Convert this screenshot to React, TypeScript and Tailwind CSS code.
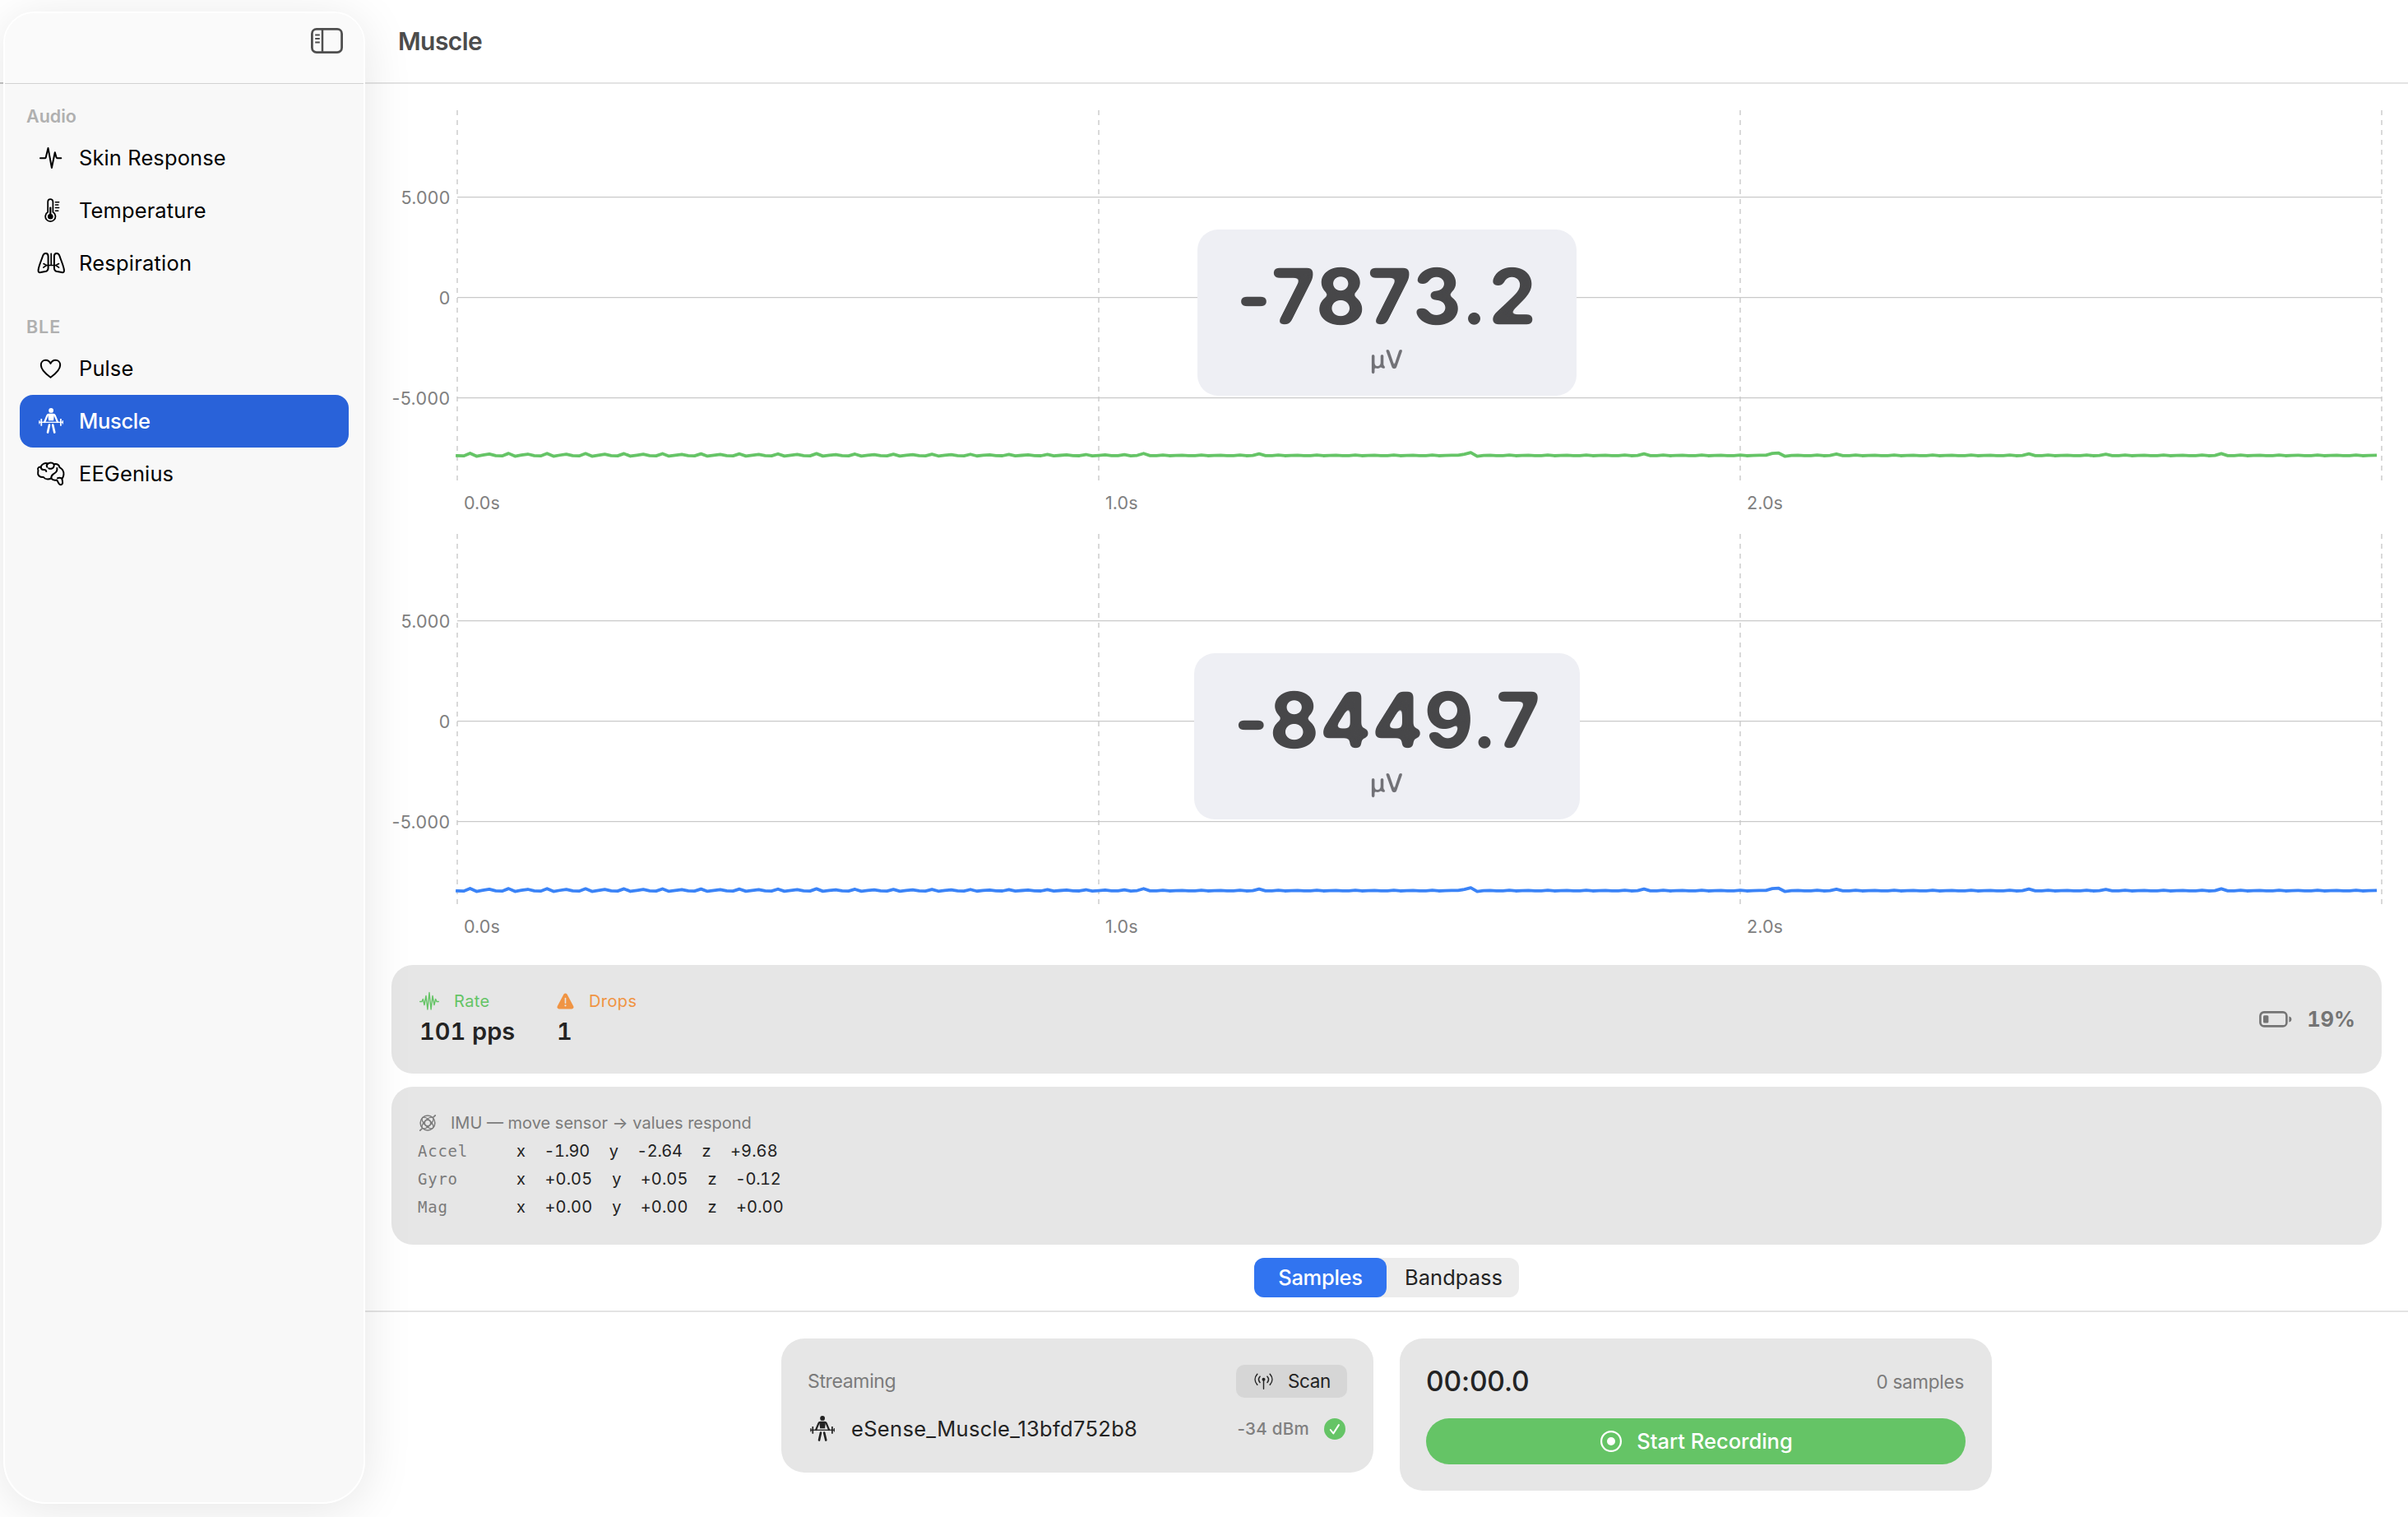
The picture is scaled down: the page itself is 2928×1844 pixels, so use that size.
import type { ReactNode } from "react";

const SAMPLE_SHAPE = [0.1, 0.4, -2.8, 0.8, -0.6, -1.9];
const BUMPS: Record<number, number> = { 56: -2.4, 107: -2.6, 125: -2.2, 156: -0.4, 157: -1.6, 158: -3.6, 159: 0.9, 185: -2.2, 204: -0.4, 205: -2.6, 206: -3.1, 207: 0.9, 215: -2, 245: -2.2, 257: -1.6, 275: -2.4 };

function trace(base: number) {
  const pts: string[] = [];
  for (let i = 0; i <= 299; i++) {
    const decay = i < 110 ? 1 - i * 0.0055 : 0.22;
    const dy = BUMPS[i] ?? SAMPLE_SHAPE[i % 6] * decay;
    pts.push(`${(112 + i * 7.8).toFixed(1)},${(base + dy).toFixed(2)}`);
  }
  return pts.join(" ");
}

function Chart({ children, color, base }: { children: ReactNode; color: string; base: number }) {
  return (
    <div className="relative h-[515px] w-full">
      <svg width="2484" height="515" viewBox="0 0 2484 515" className="block overflow-visible font-['Inter',sans-serif] text-[21.5px]">
        {[112, 892, 1672, 2452].map((x) => (
          <line key={x} x1={x} x2={x} y1="32" y2="482" stroke="#d9d9d9" strokeWidth="2" strokeDasharray="6 6" />
        ))}
        {[137.6, 259.6, 381.6].map((y) => (
          <line key={y} x1="112" x2="2452" y1={y} y2={y} stroke="#c9c9c9" strokeWidth="1.2" />
        ))}
        <g fill="#808080" textAnchor="end" letterSpacing="0.25">
          <text x="103.5" y="145.8">5.000</text>
          <text x="103.5" y="268">0</text>
          <text x="103.5" y="390" letterSpacing="0.4">-5.000</text>
        </g>
        <g fill="#808080" letterSpacing="0.1">
          <text x="120" y="517.3">0.0s</text>
          <text x="900" y="517.3">1.0s</text>
          <text x="1680" y="517.3">2.0s</text>
        </g>
        <polyline points={trace(base)} fill="none" stroke={color} strokeWidth="3.8" strokeLinejoin="round" strokeLinecap="square" />
      </svg>
      {children}
    </div>
  );
}

const readout = "h-[112px] whitespace-nowrap text-[93px] font-bold leading-[112px] text-[#474749] [filter:url(#soft-lg)] [font-feature-settings:'calt'_0]";
const unit = "-ml-px text-[31px] font-medium leading-[41px] text-[#727277] [filter:url(#soft-sm)]";

function Lifter({ size = 36 }: { size?: number }) {
  return (
    <svg width={size} height={size} viewBox="0 0 36 36" fill="none" stroke="currentColor" strokeLinecap="round" strokeLinejoin="round">
      <circle cx="18.1" cy="4.9" r="2.9" fill="currentColor" stroke="none" />
      <path d="M15.2 9.9h5.8c1 0 1.4.3 1.8 1.3L26 19M15.200 9.900c-1 0-1.400.3-1.800 1.300L10.200 19" strokeWidth="2.200" />
      <path d="M14.200 9h7.800l-.9 8.300h-6Z" fill="currentColor" stroke="none" />
      <path d="M16 22.600L14 31.600M20.200 22.600L22.300 31.600" strokeWidth="2.600" />
      <path d="M3.200 19.300H33" strokeWidth="1.300" strokeLinecap="butt" />
      <path d="M6.300 14.900v8.800M29.900 14.900v8.800" strokeWidth="1.700" strokeLinecap="butt" />
      <path d="M3.900 17v4.600M32.300 17v4.600" strokeWidth="1.100" strokeLinecap="butt" />
    </svg>
  );
}

const ic = { width: 36, height: 36, viewBox: "0 0 36 36", fill: "none", stroke: "currentColor", strokeWidth: 2, strokeLinecap: "round", strokeLinejoin: "round" } as const;

const icons: Record<string, ReactNode> = {
  skin: <svg {...ic}><path d="M5 18.3h5.8c.6 0 .8-.3.9-.8L14.5 5.9 18.9 30 22.8 11.2l1.8 6.3c.2.6.5.8 1 .8h4.7" /></svg>,
  temp: (
    <svg {...ic} strokeWidth={1.8}>
      <path d="M14.2 19.8V7.2a3.1 3.1 0 0 1 6.2 0v12.6a6.1 6.1 0 1 1-6.2 0Z" />
      <circle cx="17.3" cy="25.3" r="3.3" fill="currentColor" stroke="none" />
      <path d="M17.3 25V14.5" strokeWidth="2.2" />
      <path d="M23.4 7.7h4.3M23.4 11h3.4M23.4 14.6h4.3M23.4 18.2h3.4" strokeWidth="1.5" />
    </svg>
  ),
  lungs: (
    <svg {...ic} strokeWidth={2}>
      <path d="M14.6 21V9.5c0-4.4-5.2-4.6-6.6-.3C6 15.4 3.4 20.5 2.6 26c-.4 2.8.8 3.5 3 3.1l5.4-1c2.6-.6 3.6-1.8 3.6-4.4Z" />
      <path d="M21.9 21V9.5c0-4.4 5.2-4.6 6.6-.3 2 6.2 4.6 11.3 5.4 16.8.4 2.8-.8 3.5-3 3.1l-5.4-1c-2.6-.6-3.6-1.8-3.6-4.4Z" />
      <path d="M18.2 6.3V20.5M18.2 20.5H12.5l-3.7 2.6M12.5 20.5 9 18.6M18.2 20.5h5.7l3.7 2.6M23.9 20.5l3.6-1.9" strokeWidth="1.7" />
    </svg>
  ),
  heart: <svg {...ic}><path d="M17.5 28.8C10 23.3 5.8 18.6 5.8 13.7c0-3.5 2.6-5.9 5.7-5.9 2.6 0 4.8 1.4 6 4.1 1.2-2.7 3.4-4.1 6-4.1 3.1 0 5.7 2.4 5.7 5.9 0 4.9-4.2 9.6-11.7 15.1Z" /></svg>,
  muscle: <Lifter />,
  brain: (
    <svg {...ic}>
      <path d="M5.6 9.4C7 5.8 11 4.3 14.2 5.6c3-1.6 5.6-1.3 7.4.6 3.6-.6 6.2 1 6.9 4 3.7 2 5.3 5.6 4.9 9-.2 2.3-1.2 3.5-2 4.6.3 2.4.9 3.5.7 5.5-.4 2.2-3.2 2.6-4.4.7-.9-1.4-1.5-3-2.7-4.6-2.7.6-5.2.1-6.7-1.9-3.6 1.6-7.6 1.1-9.4-1.5-4.9.2-7.4-2.5-6.7-5.9.4-1.9.5-2.5 0-3.5-.5-1.5.9-3.3 3.4-3.2Z" />
      <path d="M5.6 9.4c.1 2.2 1.1 3.4 3.1 3.7M8.7 13.1c2.3-.4 3.4.4 3.6 2M14.2 5.6c-1.6 1.2-1.8 2.8-.8 4.2M21.6 6.2c.6 3-.4 4.7-3.2 5.5-1.1.3-2.4.1-3.2-.5M18.3 23.5c-.4-4 1.5-4.5 3.7-6 2.7-1.7 3.9-4 3.3-6.5M26 23.200c1.900-.6 3.700-.4 5.200.4" />
    </svg>
  ),
};

function NavItem({ icon, label, tracking = "tracking-[0.1px]", active = false }: { icon: string; label: string; tracking?: string; active?: boolean }) {
  return (
    <div className={`flex h-16 items-center gap-4 rounded-[16px] pl-5 text-[25.5px] ${tracking} ${active ? "bg-[#2962d9] font-medium text-white" : "text-black"}`}>
      {icons[icon]}
      <span>{label}</span>
    </div>
  );
}

function Sidebar() {
  return (
    <aside className="relative z-10 mt-[14px] h-[1814px] w-[440px] shrink-0 overflow-hidden rounded-b-[52px] rounded-t-[38px] border-2 border-white bg-[#f8f8f8] shadow-[0_8px_60px_rgba(0,0,0,0.1)]">
      <div className="flex h-[86px] items-start justify-end border-b border-[#d2d2d2] bg-[#fafafa] pr-[25px] pt-[18px] text-[#4f4f4f]">
        <svg width="39" height="31" viewBox="0 0 39 31" fill="none" stroke="currentColor">
          <rect x="1.4" y="1.4" width="36.2" height="28.2" rx="5.5" strokeWidth="2.8" />
          <path d="M14 2v27" strokeWidth="2.5" />
          <path d="M5.2 8.5h5.6M5.2 13h5.6M5.2 17.5h5.6" strokeWidth="2" />
        </svg>
      </div>
      <nav className="px-[18px]">
        <div className="mt-5 flex h-[38px] items-center pl-2 text-[21.5px] font-semibold text-[#b0b0b0]">Audio</div>
        <NavItem icon="skin" label="Skin Response" />
        <NavItem icon="temp" label="Temperature" />
        <NavItem icon="lungs" label="Respiration" tracking="tracking-[0.2px]" />
        <div className="mt-[26px] flex h-[38px] items-center pl-2 text-[21.5px] font-semibold tracking-[0.9px] text-[#b0b0b0]">BLE</div>
        <NavItem icon="heart" label="Pulse" />
        <NavItem icon="muscle" label="Muscle" tracking="tracking-[-0.3px]" active />
        <NavItem icon="brain" label="EEGenius" />
      </nav>
    </aside>
  );
}

function ImuRow({ label, values }: { label: string; values: [string, string, string] }) {
  return (
    <div className="flex h-[34px] items-center">
      <span className="w-[120px] font-['DejaVu_Sans_Mono',monospace] text-[19px] tracking-[0.75px] text-[#7b7b7b]">{label}</span>
      <div className="flex gap-6 tabular-nums [font-feature-settings:'calt'_0]">
        {values.map((v, i) => (
          <span key={i} className="flex gap-6">
            <span className="w-[10.5px]">{"xyz"[i]}</span>
            <span className={v.startsWith("-") ? "-ml-px tracking-[-0.4px]" : "tracking-[0.1px]"}>{v}</span>
          </span>
        ))}
      </div>
    </div>
  );
}

function StatusPanels() {
  return (
    <div className="flex flex-col gap-4 px-8">
      <section className="flex h-[132px] rounded-[26px] bg-[#e6e6e6] text-[#232323]">
        <div className="ml-[34px] w-[167px] pt-[29px]">
          <div className="flex h-[29px] items-center gap-[18px] text-[20px] tracking-[0.4px] text-[#65c466]">
            <svg width="24" height="24" viewBox="0 0 24 24" fill="none" stroke="currentColor" strokeWidth="1.4" strokeLinejoin="round" strokeLinecap="round">
              <path d="M.7 12.5H3L4.3 9.5 6 16.5 8 5.5 9.9 22 12 1.5 14.1 22 16 5.5l2 11L19.7 9.5 21 12.5h2.3" />
            </svg>
            Rate
          </div>
          <div className="h-[44px] text-[29px] font-semibold leading-[46px] tabular-nums">101 pps</div>
        </div>
        <div className="pt-[29px]">
          <div className="flex h-[29px] items-center gap-[18px] text-[20px] tracking-[0.4px] text-[#f09443]">
            <svg width="21" height="20" viewBox="0 0 21 20">
              <path d="M8.5 1.6a2.3 2.3 0 0 1 4 0L20.2 15.9a2.3 2.3 0 0 1-2 3.5H2.8a2.3 2.3 0 0 1-2-3.5Z" fill="currentColor" />
              <path d="M10.5 6.5v5.8" stroke="#e6e6e6" strokeWidth="1.6" strokeLinecap="round" />
              <circle cx="10.5" cy="15.3" r="1.1" fill="#e6e6e6" />
            </svg>
            Drops
          </div>
          <div className="h-[44px] text-[29px] font-semibold leading-[46px] tabular-nums">1</div>
        </div>
        <div className="ml-auto mr-[32px] flex items-center gap-[18px] text-[25.5px] font-bold tabular-nums text-[#747474]">
          <svg width="40" height="20" viewBox="0 0 40 20" fill="none">
            <rect x="1.4" y="1.4" width="32" height="17" rx="4.5" stroke="currentColor" strokeWidth="2.6" />
            <rect x="5" y="5.2" width="6.4" height="9.4" rx="1.5" fill="currentColor" />
            <path d="M36.4 6.500c2 .6 3 1.800 3 3.500s-1 2.900-3 3.500Z" fill="currentColor" />
          </svg>
          19%
        </div>
      </section>
      <section className="h-[192px] rounded-[26px] bg-[#e6e6e6] pl-8 pt-[27px] text-[20px] text-[#232323]">
        <div className="flex h-[34px] items-center gap-[18px] pl-[2px] text-[#7b7b7b]">
          <svg width="20" height="20" viewBox="0 0 20 20" fill="none" stroke="currentColor" strokeWidth="1.3" strokeLinecap="round">
            <circle cx="10" cy="10" r="8.9" strokeWidth="1.5" />
            <ellipse cx="10" cy="10" rx="9" ry="4" transform="rotate(45 10 10)" />
            <ellipse cx="10" cy="10" rx="9" ry="4" transform="rotate(-45 10 10)" />
            <circle cx="10" cy="10" r="3.6" />
            <path d="M.8 19.2 3 17M17 3 19.2.8" strokeWidth="1.7" />
          </svg>
          IMU — move sensor → values respond
        </div>
        <ImuRow label="Accel" values={["-1.90", "-2.64", "+9.68"]} />
        <ImuRow label="Gyro" values={["+0.05", "+0.05", "-0.12"]} />
        <ImuRow label="Mag" values={["+0.00", "+0.00", "+0.00"]} />
      </section>
    </div>
  );
}

function Footer() {
  return (
    <footer className="flex items-start justify-center gap-8 border-t-2 border-[#e3e3e3] pt-8 text-[#232323]">
      <section className="h-[163px] w-[720px] rounded-[28px] bg-[#e6e6e6] p-8">
        <div className="flex h-10 items-center justify-between">
          <span className="text-[23px] tracking-[-0.35px] text-[#7b7b7b]">Streaming</span>
          <button className="flex h-10 w-[135px] items-center gap-[18px] rounded-[10px] bg-[#d6d6d6] pl-[22px] text-[22.5px] tracking-[-0.4px]">
            <svg width="23" height="20" viewBox="0 0 23 20" fill="none" stroke="currentColor" strokeWidth="1.5" strokeLinecap="round">
              <path d="M3.8 1.2C.2 5.2.2 10.3 3.8 14.3M19.2 1.2c3.6 4 3.6 9.1 0 13.1M7 4.2c-1.9 2.3-1.9 5 0 7.2M16 4.2c1.9 2.3 1.9 5 0 7.2" />
              <circle cx="11.5" cy="7.8" r="2" fill="currentColor" stroke="none" />
              <path d="M11.5 8v11.2" strokeWidth="1.4" />
            </svg>
            Scan
          </button>
        </div>
        <div className="mt-4 flex h-11 items-center">
          <span className="mr-[17px]"><Lifter /></span>
          <span className="text-[25.5px] tracking-[0.31px]">eSense_Muscle_13bfd752b8</span>
          <span className="ml-auto mr-[18px] text-[20.5px] font-medium tracking-[0.3px] text-[#808080]">-34 dBm</span>
          <svg width="26" height="26" viewBox="0 0 26 26" className="mr-[2px]">
            <circle cx="13" cy="13" r="13" fill="#65c466" />
            <path d="M7.8 14l3.5 4.4 6.6-10.3" fill="none" stroke="#fff" strokeWidth="2" strokeLinecap="round" strokeLinejoin="round" />
          </svg>
        </div>
      </section>
      <section className="h-[185px] w-[720px] rounded-[28px] bg-[#e6e6e6] p-8">
        <div className="flex h-[41px] items-center justify-between">
          <span className="text-[33.5px] font-medium tracking-[-0.17px]">00:00.0</span>
          <span className="mr-[2px] text-[22.5px] tracking-[-0.26px] text-[#7b7b7b]">0 samples</span>
        </div>
        <button className="mt-6 flex h-14 w-full items-center justify-center gap-[18px] rounded-full bg-[#65c466] pl-[2px] text-[25.5px] font-medium text-white">
          <svg width="26" height="26" viewBox="0 0 26 26">
            <circle cx="13" cy="13" r="11.9" fill="none" stroke="#fff" strokeWidth="2.2" />
            <circle cx="13" cy="13" r="5" fill="#fff" />
          </svg>
          Start Recording
        </button>
      </section>
    </footer>
  );
}

export default function App() {
  return (
    <div className="flex h-[1844px] w-[2928px] overflow-hidden bg-white font-['Inter',sans-serif]">
      <svg width="0" height="0" className="absolute">
        <filter id="soft-lg" colorInterpolationFilters="sRGB">
          <feGaussianBlur stdDeviation="3.2" />
          <feColorMatrix values="1 0 0 0 0  0 1 0 0 0  0 0 1 0 0  0 0 0 9 -3.7" />
        </filter>
        <filter id="soft-sm" colorInterpolationFilters="sRGB">
          <feGaussianBlur stdDeviation="0.9" />
          <feColorMatrix values="1 0 0 0 0  0 1 0 0 0  0 0 1 0 0  0 0 0 3 -0.9" />
        </filter>
      </svg>
      <div className="h-[102px] w-1 shrink-0 border-b-2 border-[#c4c4c4]" />
      <Sidebar />
      <main className="flex w-[2484px] flex-col">
        <header className="flex h-[102px] shrink-0 items-center border-b-2 border-[#e3e3e3] pl-[40px] text-[30px] font-semibold tracking-[-0.55px] text-[#4c4c4c]">Muscle</header>
        <Chart color="#65c466" base={451.8}>
          <div className="absolute left-[1012px] top-[177px] h-[202px] w-[461px] rounded-[25px] bg-[#eeeff4] pt-[25px] text-center">
            <div className={`${readout} tracking-[1.9px]`}>-7873.2</div>
            <div className={unit}>µV</div>
          </div>
        </Chart>
        <Chart color="#3a83f7" base={465.8}>
          <div className="absolute left-[1008px] top-[177px] h-[202px] w-[469px] rounded-[25px] bg-[#eeeff4] pt-[25px] text-center">
            <div className={`${readout} tracking-[0.5px]`}>-8449.7</div>
            <div className={unit}>µV</div>
          </div>
        </Chart>
        <div className="h-[41px] shrink-0" />
        <StatusPanels />
        <div className="mx-auto my-4 flex h-12 w-[322px] rounded-[12px] bg-[#ececec] text-[25.5px] text-[#232323]">
          <div className="flex w-[161px] items-center justify-center rounded-[12px] bg-[#3174f0] font-medium tracking-[-0.29px] text-white">Samples</div>
          <div className="flex w-[161px] items-center justify-center pl-[2px]">Bandpass</div>
        </div>
        <Footer />
      </main>
    </div>
  );
}
